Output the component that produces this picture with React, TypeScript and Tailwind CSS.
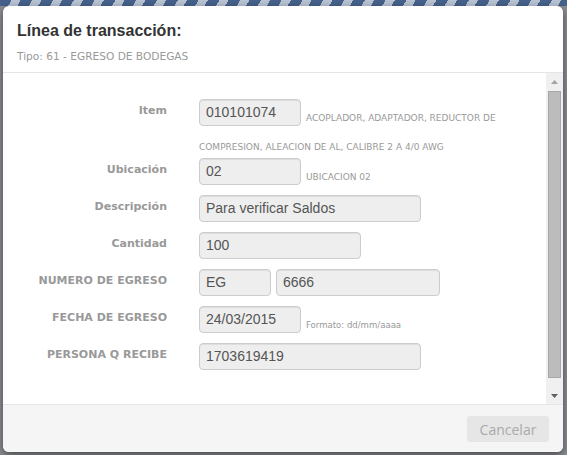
import React from 'react';

type Field = {
  label: string;
  inputs: { value: string; w: string }[];
  help?: string;
  helpClass?: string;
};

const fields: Field[] = [
  { label: 'Ubicación', inputs: [{ value: '02', w: 'w-[102px]' }], help: 'UBICACION 02', helpClass: "text-[9px] font-['DejaVu_Sans',Verdana,sans-serif]" },
  { label: 'Descripción', inputs: [{ value: 'Para verificar Saldos', w: 'w-[222px]' }] },
  { label: 'Cantidad', inputs: [{ value: '100', w: 'w-[162px]' }] },
  { label: 'NUMERO DE EGRESO', inputs: [{ value: 'EG', w: 'w-[72px]' }, { value: '6666', w: 'w-[164px]' }] },
  { label: 'FECHA DE EGRESO', inputs: [{ value: '24/03/2015', w: 'w-[102px]' }], help: 'Formato: dd/mm/aaaa', helpClass: "text-[9.5px] font-['DejaVu_Sans_Condensed','DejaVu_Sans',sans-serif]" },
  { label: 'PERSONA Q RECIBE', inputs: [{ value: '1703619419', w: 'w-[222px]' }] },
];

const Input: React.FC<{ value: string; w: string }> = ({ value, w }) => (
  <span className={`inline-block h-[27px] ${w} shrink-0 rounded-[4px] border border-[#cccccc] bg-[#eeeeee] px-[6px] text-[14px] leading-[25px] text-[#555555] font-['Liberation_Sans',Arial,sans-serif] shadow-[inset_0_1px_1px_rgba(0,0,0,0.075)]`}>
    {value}
  </span>
);

const Label: React.FC<{ children: string }> = ({ children }) => (
  <div className="w-[164px] shrink-0 pt-[5px] text-right text-[11px] font-bold leading-[14px] text-[#999999] font-['DejaVu_Sans',Verdana,sans-serif]">
    {children}
  </div>
);

export default function App() {
  return (
    <div className="relative h-[455px] w-[567px] overflow-hidden bg-[#8b8e94]">
      <div className="h-[6px] w-full bg-[repeating-linear-gradient(120deg,#46628c_0px,#46628c_10px,#b9c4d4_10px,#b9c4d4_18px)]" />
      <div className="absolute left-[3px] top-[6px] flex h-[446px] w-[560px] flex-col overflow-hidden rounded-[6px] bg-white shadow-[0_3px_9px_rgba(0,0,0,0.5)]">
        <div className="h-[67px] shrink-0 border-b border-[#e5e5e5] px-[14px] pt-[14px]">
          <div className="text-[16px] font-bold leading-[22px] text-[#333333] font-['Liberation_Sans',Arial,sans-serif]">Línea de transacción:</div>
          <div className="mt-[7px] text-[10.6px] leading-[14px] text-[#999999] font-['DejaVu_Sans',Verdana,sans-serif]">Tipo: 61 - EGRESO DE BODEGAS</div>
        </div>
        <div className="flex min-h-0 flex-1">
          <div className="flex-1 pt-[26px]">
            <div className="mb-[4px] flex gap-[32px]">
              <Label>Item</Label>
              <div className="w-[330px] text-[9px] leading-[14px] text-[#999999] font-['DejaVu_Sans',Verdana,sans-serif]">
                <div className="flex items-end">
                  <Input value="010101074" w="w-[102px]" />
                  <span className="ml-[5px] pb-[1px]">ACOPLADOR, ADAPTADOR, REDUCTOR DE</span>
                </div>
                <div className="mt-[14px]">COMPRESION, ALEACION DE AL, CALIBRE 2 A 4/0 AWG</div>
              </div>
            </div>
            {fields.map((f) => (
              <div key={f.label} className="mb-[10px] flex gap-[32px]">
                <Label>{f.label}</Label>
                <div className="flex items-end gap-[5px]">
                  {f.inputs.map((i) => (
                    <Input key={i.value} value={i.value} w={i.w} />
                  ))}
                  {f.help && (
                    <span className={`pb-[1px] leading-[14px] text-[#999999] ${f.helpClass}`}>{f.help}</span>
                  )}
                </div>
              </div>
            ))}
          </div>
          <div className="flex w-[17px] shrink-0 flex-col items-center bg-[#f0f0f0]">
            <div className="flex h-[17px] w-full items-center justify-center">
              <svg width="7" height="4" viewBox="0 0 7 4"><path d="M0 4 L3.5 0 L7 4 Z" fill="#a3a3a3" /></svg>
            </div>
            <div className="mt-[1px] h-[287px] w-[13px] border border-[#a8a8a8] bg-[#bcbcbc]" />
            <div className="flex-1" />
            <div className="flex h-[17px] w-full items-center justify-center">
              <svg width="7" height="4" viewBox="0 0 7 4"><path d="M0 0 L7 0 L3.5 4 Z" fill="#606060" /></svg>
            </div>
          </div>
        </div>
        <div className="flex h-[48px] shrink-0 items-start justify-end border-t border-[#e5e5e5] bg-[#f5f5f5] pr-[14px] pt-[11px]">
          <button className="h-[26px] w-[82px] rounded-[3px] bg-[#e6e6e6] text-[14px] text-[#aaaaaa] font-['Open_Sans',sans-serif]">Cancelar</button>
        </div>
      </div>
    </div>
  );
}
